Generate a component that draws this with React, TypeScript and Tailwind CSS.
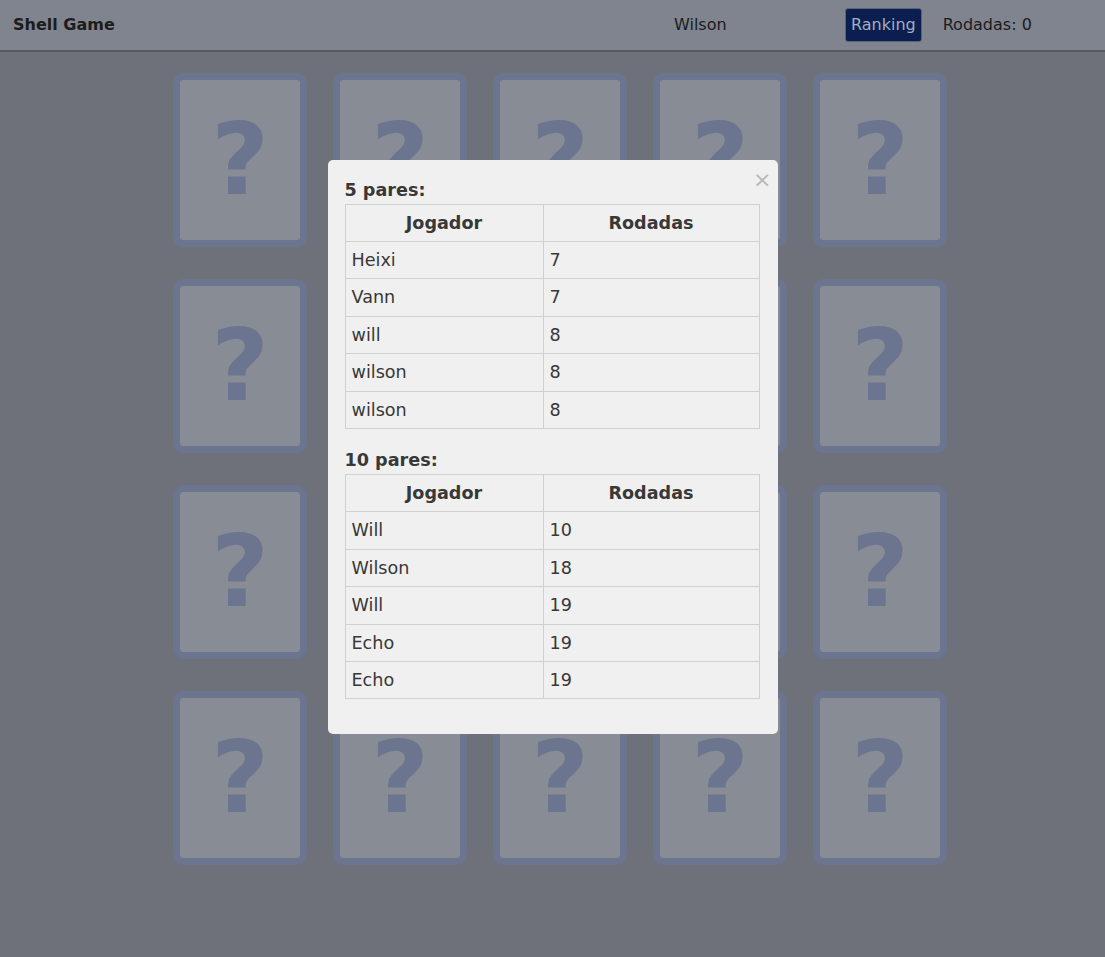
const font = { fontFamily: '"DejaVu Sans", "Liberation Sans", sans-serif' }

const ranking = [
  {
    title: '5 pares:',
    rows: [
      ['Heixi', 7],
      ['Vann', 7],
      ['will', 8],
      ['wilson', 8],
      ['wilson', 8],
    ],
  },
  {
    title: '10 pares:',
    rows: [
      ['Will', 10],
      ['Wilson', 18],
      ['Will', 19],
      ['Echo', 19],
      ['Echo', 19],
    ],
  },
]

function Card() {
  return (
    <div className="w-[134px] h-[174px] p-[7px] rounded-[10px] bg-[#6b7590]">
      <div className="w-full h-full rounded-[3px] bg-[#888c95] flex items-center justify-center">
        <span className="text-[100px] font-bold leading-none text-[#6b7590]">?</span>
      </div>
    </div>
  )
}

export default function App() {
  return (
    <div className="min-h-[957px] bg-[#6e717a] relative" style={font}>
      <header className="h-[52px] bg-[#7f848e] border-b-2 border-[#55585f] flex items-center text-[16px] text-[#1c1c1c]">
        <div className="w-[674px] pl-[13px] font-bold">Shell Game</div>
        <div className="w-[171px]">Wilson</div>
        <button className="h-[34px] px-[5px] rounded-[3px] bg-[#0a1f4f] border border-[#5b6272] text-[#a3acc0]">
          Ranking
        </button>
        <div className="ml-[21px]">Rodadas: 0</div>
      </header>

      <main className="pt-[21px] pl-[173px]">
        <div className="grid grid-cols-[repeat(5,134px)] gap-x-[26px] gap-y-[32px]">
          {Array.from({ length: 20 }).map((_, i) => (
            <Card key={i} />
          ))}
        </div>
      </main>

      <div className="absolute inset-0 flex justify-center pt-[160px]">
        <div className="relative w-[450px] h-[574px] bg-[#f0f0f0] rounded-[5px] px-[17px] pt-[20px] text-[#383838] text-[17.6px]">
          <span className="absolute right-[6px] top-[9px] text-[22px] leading-none text-[#b8b8b8]">×</span>
          {ranking.map((section, idx) => (
            <div key={section.title} className={idx === 0 ? 'mb-[21.5px]' : ''}>
              <h3 className="font-bold leading-[20.5px] mb-[3px]">{section.title}</h3>
              <table className="w-[415px] border-collapse">
                <thead>
                  <tr>
                    <th className="w-[198px] border border-[#d0d0d0] py-2 leading-[20.4px] font-bold text-center">Jogador</th>
                    <th className="border border-[#d0d0d0] py-2 leading-[20.4px] font-bold text-center">Rodadas</th>
                  </tr>
                </thead>
                <tbody>
                  {section.rows.map(([name, n], i) => (
                    <tr key={i}>
                      <td className="border border-[#d0d0d0] py-2 px-[6px] leading-[20.4px]">{name}</td>
                      <td className="border border-[#d0d0d0] py-2 px-[6px] leading-[20.4px]">{n}</td>
                    </tr>
                  ))}
                </tbody>
              </table>
            </div>
          ))}
        </div>
      </div>
    </div>
  )
}
